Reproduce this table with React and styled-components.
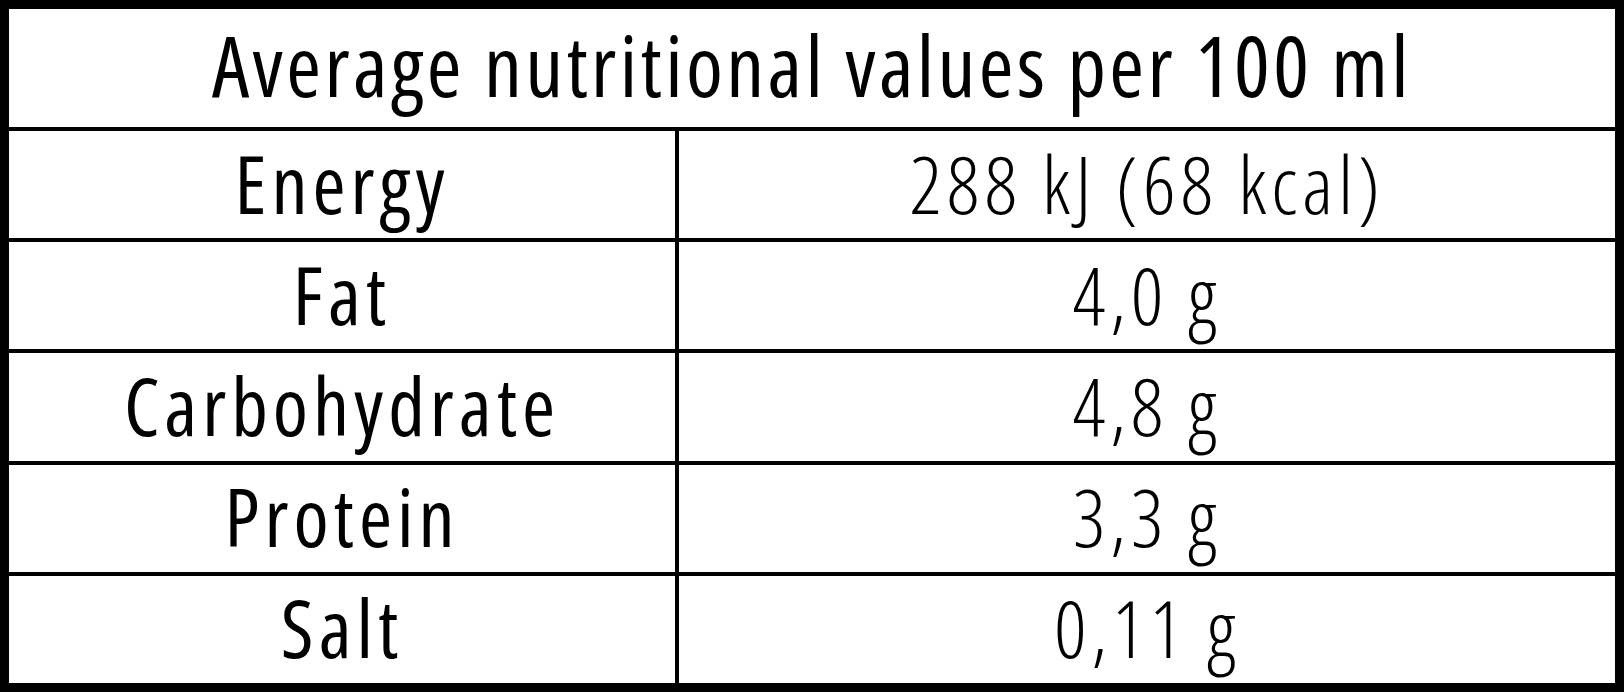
import React from "react";
import styled, { createGlobalStyle } from "styled-components";

const GlobalStyle = createGlobalStyle`
  html, body {
    margin: 0;
    padding: 0;
    background: #fff;
  }
`;

const rows = [
  { label: "Energy", value: "288 kJ (68 kcal)" },
  { label: "Fat", value: "4,0 g" },
  { label: "Carbohydrate", value: "4,8 g" },
  { label: "Protein", value: "3,3 g" },
  { label: "Salt", value: "0,11 g" },
];

const Table = styled.div`
  box-sizing: border-box;
  width: 1624px;
  height: 692px;
  border: 9px solid #000;
  background: #000;
  display: grid;
  grid-template-columns: 666px 1fr;
  grid-template-rows: 118px repeat(5, 1fr);
  gap: 4px;
  font-family: "Open Sans", "Noto Sans", sans-serif;
  font-stretch: 75%;
  color: #000;
`;

const Cell = styled.div`
  background: #fff;
  display: flex;
  align-items: center;
  justify-content: center;
  white-space: nowrap;
  line-height: 1;
`;

const Title = styled(Cell)`
  grid-column: 1 / span 2;
  font-size: 84px;
  font-weight: 500;
  letter-spacing: 3.4px;
  padding-bottom: 6px;
`;

const Label = styled(Cell)`
  font-size: 80px;
  font-weight: 500;
  letter-spacing: 5px;
  padding-bottom: 4px;
`;

const Value = styled(Cell)`
  font-size: 80px;
  font-weight: 300;
  letter-spacing: 5px;
  padding-bottom: 4px;
`;

const App = () => {
  return (
    <>
      <GlobalStyle />
      <Table>
        <Title>Average nutritional values per 100 ml</Title>
        {rows.map((row) => (
          <React.Fragment key={row.label}>
            <Label>{row.label}</Label>
            <Value>{row.value}</Value>
          </React.Fragment>
        ))}
      </Table>
    </>
  );
};

export default App;
